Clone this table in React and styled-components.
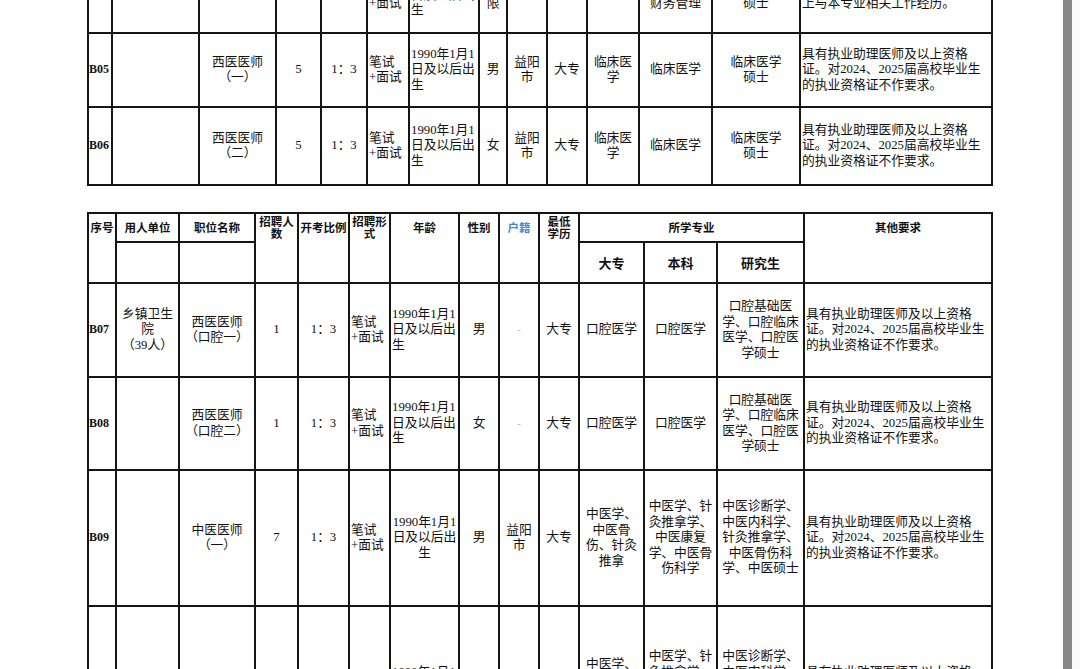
import React from "react";
import styled, { createGlobalStyle } from "styled-components";

const GlobalStyle = createGlobalStyle`
  html, body {
    margin: 0;
    padding: 0;
    background: #ffffff;
  }
  body {
    font-family: "Liberation Serif", "Noto Sans CJK SC", serif;
    color: #111;
  }
`;

const Page = styled.div`
  display: flex;
  height: 669px;
  overflow: hidden;
  background: #ffffff;
`;

const Sheet = styled.div`
  width: 1063px;
  flex: none;
  box-sizing: border-box;
  padding-left: 87px;
  display: flex;
  flex-direction: column;
  gap: 26px;
`;

const ScrollTrack = styled.div`
  width: 9px;
  flex: none;
  background: #878787;
`;

const Edge = styled.div`
  flex: 1;
  background: #fafafa;
`;

const Table = styled.table`
  border-collapse: collapse;
  table-layout: fixed;
  width: ${(p) => p.$width}px;
  margin-top: ${(p) => p.$offset || 0}px;
  font-size: 12.75px;
  line-height: 15.5px;
  flex: none;
`;

const Row = styled.tr`
  height: ${(p) => p.$h}px;
`;

const Cell = styled.td`
  border: 2px solid #151515;
  padding: 0 1px;
  text-align: ${(p) => p.$align || "center"};
  vertical-align: middle;
  white-space: pre;
  overflow: hidden;
`;

const Head = styled.th`
  border: 2px solid #151515;
  padding: 0;
  font-family: "Noto Sans CJK SC", sans-serif;
  font-weight: 700;
  font-size: ${(p) => (p.$sub ? 13 : 11.5)}px;
  line-height: 11.5px;
  text-align: center;
  vertical-align: ${(p) => (p.$top ? "top" : "middle")};
  color: ${(p) => (p.$blue ? "#4a86d6" : "#111")};
  white-space: pre;
  overflow: hidden;
`;

const HeadLabel = styled.div`
  height: 27px;
  display: flex;
  align-items: center;
  justify-content: center;
`;

const Code = styled.span`
  font-family: "Liberation Serif", serif;
  font-weight: 700;
  font-size: 12px;
  margin-left: -1px;
`;

const Dash = styled.span`
  color: #b5b5b5;
  font-size: 11px;
`;

const widthsA = [24, 87, 77, 45, 46, 42, 70, 28, 40, 40, 52, 73, 88, 192];
const widthsB = [28, 63, 76, 43, 51, 41, 69, 40, 40, 40, 65, 73, 87, 188];

const REQ = "具有执业助理医师及以上资格\n证。对2024、2025届高校毕业生\n的执业资格证不作要求。";

// align per column (after 序号): l = left, c = center
const alignCols = ["c", "c", "c", "c", "l", "l", "c", "c", "c", "c", "c", "c", "l"];

const rowsA = [
  {
    h: 75,
    cells: ["", "", "", "", "笔试\n+面试", "1990年1月1\n日及以后出\n生", "不\n限", "", "", "", "会计学、\n财务管理", "会计学\n硕士", "具有会计从业资格证，具有1年以\n上与本专业相关工作经历。"],
  },
  {
    h: 74,
    code: "B05",
    cells: ["", "西医医师\n（一）", "5", "1：3", "笔试\n+面试", "1990年1月1\n日及以后出\n生", "男", "益阳\n市", "大专", "临床医\n学", "临床医学", "临床医学\n硕士", REQ],
  },
  {
    h: 78,
    code: "B06",
    cells: ["", "西医医师\n（二）", "5", "1：3", "笔试\n+面试", "1990年1月1\n日及以后出\n生", "女", "益阳\n市", "大专", "临床医\n学", "临床医学", "临床医学\n硕士", REQ],
  },
];

const rowsB = [
  {
    h: 94,
    code: "B07",
    cells: ["乡镇卫生\n院\n（39人）", "西医医师\n（口腔一）", "1", "1：3", "笔试\n+面试", "1990年1月1\n日及以后出\n生", "男", "-", "大专", "口腔医学", "口腔医学", "口腔基础医\n学、口腔临床\n医学、口腔医\n学硕士", REQ],
  },
  {
    h: 93,
    code: "B08",
    cells: ["", "西医医师\n（口腔二）", "1", "1：3", "笔试\n+面试", "1990年1月1\n日及以后出\n生", "女", "-", "大专", "口腔医学", "口腔医学", "口腔基础医\n学、口腔临床\n医学、口腔医\n学硕士", REQ],
  },
  {
    h: 136,
    code: "B09",
    ageCenter: true,
    cells: ["", "中医医师\n（一）", "7", "1：3", "笔试\n+面试", "1990年1月1\n日及以后出\n生", "男", "益阳\n市", "大专", "中医学、\n中医骨\n伤、针灸\n推拿", "中医学、针\n灸推拿学、\n中医康复\n学、中医骨\n伤科学", "中医诊断学、\n中医内科学、\n针灸推拿学、\n中医骨伤科\n学、中医硕士", REQ],
  },
  {
    h: 164,
    code: "B10",
    cells: ["", "中医医师\n（二）", "7", "1：3", "笔试\n+面试", "1990年1月1\n日及以后出\n生", "女", "益阳\n市", "大专", "中医学、\n中医骨\n伤、针灸\n推拿", "中医学、针\n灸推拿学、\n中医康复\n学、中医骨\n伤科学", "中医诊断学、\n中医内科学、\n针灸推拿学、\n中医骨伤科\n学、中医硕士", REQ],
  },
];

const Cols = ({ widths }) => (
  <colgroup>
    {widths.map((w, i) => (
      <col key={i} style={{ width: w }} />
    ))}
  </colgroup>
);

const DataRow = ({ row }) => (
  <Row $h={row.h}>
    <Cell $align="left">{row.code ? <Code>{row.code}</Code> : ""}</Cell>
    {row.cells.map((text, i) => {
      let align = alignCols[i] === "l" ? "left" : "center";
      if (i === 5 && row.ageCenter) align = "center";
      return (
        <Cell key={i} $align={align}>
          {text === "-" ? <Dash>-</Dash> : text}
        </Cell>
      );
    })}
  </Row>
);

const TopLabel = ({ children, blue }) => (
  <Head rowSpan={2} $top $blue={blue}>
    <HeadLabel>{children}</HeadLabel>
  </Head>
);

export default function App() {
  return (
    <Page>
      <GlobalStyle />
      <Sheet>
        <Table $width={904} $offset={-43}>
          <Cols widths={widthsA} />
          <tbody>
            {rowsA.map((r, i) => (
              <DataRow key={i} row={r} />
            ))}
          </tbody>
        </Table>

        <Table $width={904}>
          <Cols widths={widthsB} />
          <thead>
            <Row $h={29}>
              <TopLabel>序号</TopLabel>
              <Head>用人单位</Head>
              <Head>职位名称</Head>
              <TopLabel>{"招聘人\n数"}</TopLabel>
              <TopLabel>开考比例</TopLabel>
              <TopLabel>{"招聘形\n式"}</TopLabel>
              <TopLabel>年龄</TopLabel>
              <TopLabel>性别</TopLabel>
              <TopLabel blue>户籍</TopLabel>
              <TopLabel>{"最低\n学历"}</TopLabel>
              <Head colSpan={3}>所学专业</Head>
              <TopLabel>其他要求</TopLabel>
            </Row>
            <Row $h={41}>
              <Head />
              <Head />
              <Head $sub>大专</Head>
              <Head $sub>本科</Head>
              <Head $sub>研究生</Head>
            </Row>
          </thead>
          <tbody>
            {rowsB.map((r, i) => (
              <DataRow key={i} row={r} />
            ))}
          </tbody>
        </Table>
      </Sheet>
      <ScrollTrack />
      <Edge />
    </Page>
  );
}
